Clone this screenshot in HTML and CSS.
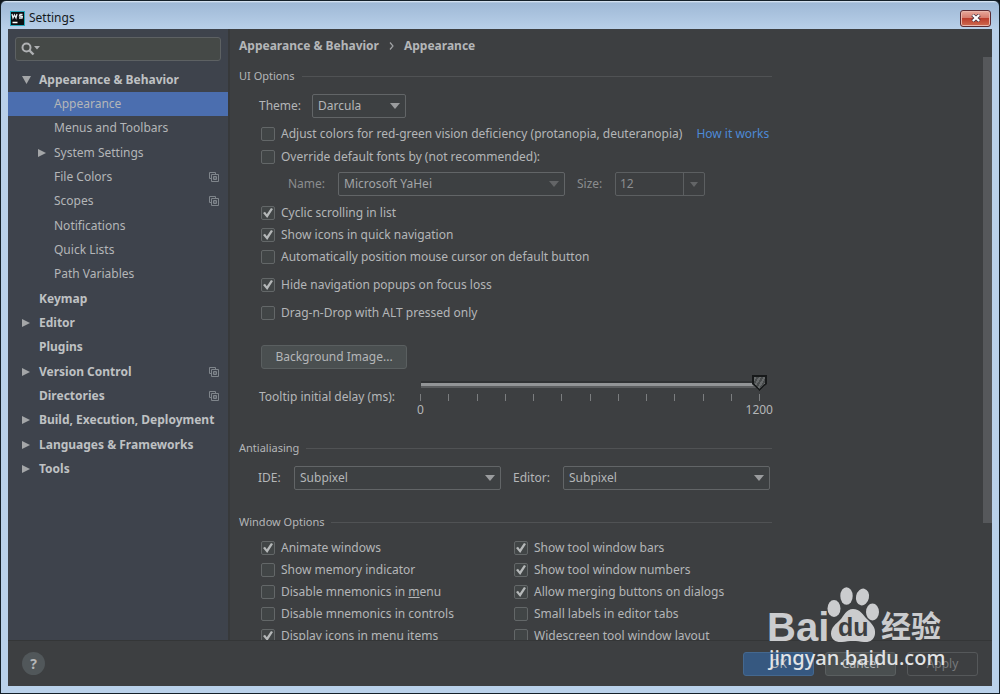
FILE: index.html
```html
<!DOCTYPE html>
<html lang="en">
<head>
<meta charset="utf-8">
<title>Settings</title>
<link rel="stylesheet" href="styles.css">
</head>
<body>
<svg class="defs" width="0" height="0" aria-hidden="true">
  <symbol id="copy" viewBox="0 0 10 10"><path d="M2.500 6.500H.5v-6h6v2M2.500 2.500h7v7h-7zM4.500 4.500h3v3h-3zM4.500 6h3" fill="none" stroke="currentColor"/></symbol>
  <symbol id="right" viewBox="0 0 8 10"><path d="M0 1l8 4-8 4z" fill="currentColor"/></symbol>
  <symbol id="down" viewBox="0 0 10 8"><path d="M1 0h9L5.500 8z" fill="currentColor"/></symbol>
</svg>
<div class="window">
  <header class="titlebar">
    <svg class="app-icon" width="15" height="15" viewBox="0 0 15 15" aria-hidden="true">
      <rect width="15" height="15" fill="#27a9bd"/><rect x="1" y="1" width="13" height="13" fill="#0c0f11"/>
      <path d="M2 3l1 4 1.500-3L6 7l1-4M12.500 3.500H10L9.500 5l2.800.6L12 7H9" fill="none" stroke="#e8eef0" stroke-width="1.300"/>
      <path d="M2.500 11.500h5" stroke="#fff" stroke-width="1.300"/>
    </svg>
    <h1 class="title">Settings</h1>
    <button class="close" aria-label="Close"><svg width="10" height="8" viewBox="0 0 10 8"><path d="M1.500.8l7 6.400M8.500.8l-7 6.400" stroke="#4a3340" stroke-width="3.600"/><path d="M1.800 1l6.400 6M8.200 1L1.800 7" stroke="#fff" stroke-width="2.200"/></svg></button>
  </header>

  <div class="client">
    <div class="body">
      <aside class="sidebar">
        <label class="search">
          <svg width="19" height="14" viewBox="0 0 19 14" aria-hidden="true"><circle cx="5.500" cy="5.500" r="4" fill="none" stroke="#afb1b3" stroke-width="2"/><path d="M8.500 8.500l4 4" stroke="#afb1b3" stroke-width="2.400"/><path d="M13 4h6l-3 3.500z" fill="#afb1b3"/></svg>
          <input type="text" aria-label="Search settings">
        </label>
        <nav>
          <ul class="tree">
            <li class="top"><svg class="arrow open"><use href="#down"/></svg>Appearance &amp; Behavior</li>
            <li class="child selected">Appearance</li>
            <li class="child">Menus and Toolbars</li>
            <li class="child"><svg class="arrow"><use href="#right"/></svg>System Settings</li>
            <li class="child">File Colors<svg class="copy"><use href="#copy"/></svg></li>
            <li class="child">Scopes<svg class="copy"><use href="#copy"/></svg></li>
            <li class="child">Notifications</li>
            <li class="child">Quick Lists</li>
            <li class="child">Path Variables</li>
            <li class="top">Keymap</li>
            <li class="top"><svg class="arrow"><use href="#right"/></svg>Editor</li>
            <li class="top">Plugins</li>
            <li class="top"><svg class="arrow"><use href="#right"/></svg>Version Control<svg class="copy"><use href="#copy"/></svg></li>
            <li class="top">Directories<svg class="copy"><use href="#copy"/></svg></li>
            <li class="top"><svg class="arrow"><use href="#right"/></svg>Build, Execution, Deployment</li>
            <li class="top"><svg class="arrow"><use href="#right"/></svg>Languages &amp; Frameworks</li>
            <li class="top"><svg class="arrow"><use href="#right"/></svg>Tools</li>
          </ul>
        </nav>
      </aside>

      <main class="main">
        <div class="crumbs"><span>Appearance &amp; Behavior</span><svg width="5" height="8" viewBox="0 0 5 8" aria-hidden="true"><path d="M1 .5L4 4 1 7.500" fill="none" stroke="#a0a2a4" stroke-width="1.200"/></svg><span>Appearance</span></div>
        <div class="scroll">
          <div class="page">
            <section>
              <h2>UI Options</h2>
              <div class="row theme">
                <label for="theme">Theme:</label>
                <span class="combo"><select id="theme"><option>Darcula</option></select></span>
              </div>
              <div class="checks">
                <div class="line"><label><input type="checkbox">Adjust colors for red-green vision deficiency (protanopia, deuteranopia)</label><a href="#">How it works</a></div>
                <label><input type="checkbox">Override default fonts by (not recommended):</label>
              </div>
              <div class="row font">
                <label for="name">Name:</label>
                <span class="combo off"><select id="name"><option>Microsoft YaHei</option></select></span>
                <label class="size" for="size">Size:</label>
                <span class="editable"><input id="size" type="text" value="12"><button aria-label="Choose size"><svg width="8" height="5" viewBox="0 0 8 5"><path d="M0 0h8L4 5z" fill="currentColor"/></svg></button></span>
              </div>
              <div class="checks compact">
                <label><input type="checkbox" checked>Cyclic scrolling in list</label>
                <label><input type="checkbox" checked>Show icons in quick navigation</label>
                <label><input type="checkbox">Automatically position mouse cursor on default button</label>
                <label class="apart"><input type="checkbox" checked>Hide navigation popups on focus loss</label>
                <label class="apart"><input type="checkbox">Drag-n-Drop with ALT pressed only</label>
              </div>
              <button class="btn image">Background Image...</button>
              <div class="delay">
                <label for="delay">Tooltip initial delay (ms):</label>
                <div class="slider">
                  <input id="delay" type="range" min="0" max="1200" value="1200">
                  <div class="ticks"><i></i><i></i><i></i><i></i><i></i><i></i><i></i><i></i><i></i><i></i><i></i><i></i><i></i></div>
                  <div class="scale"><span>0</span><span>1200</span></div>
                </div>
              </div>
            </section>

            <section class="antialiasing">
              <h2>Antialiasing</h2>
              <div class="row pair">
                <label for="ide">IDE:</label>
                <span class="combo"><select id="ide"><option>Subpixel</option></select></span>
                <label class="editor" for="editor">Editor:</label>
                <span class="combo"><select id="editor"><option>Subpixel</option></select></span>
              </div>
            </section>

            <section class="windows">
              <h2>Window Options</h2>
              <div class="checks compact columns">
                <label><input type="checkbox" checked>Animate windows</label>
                <label><input type="checkbox" checked>Show tool window bars</label>
                <label><input type="checkbox">Show memory indicator</label>
                <label><input type="checkbox" checked>Show tool window numbers</label>
                <label><input type="checkbox"><span>Disable mnemonics in <u>m</u>enu</span></label>
                <label><input type="checkbox" checked>Allow merging buttons on dialogs</label>
                <label><input type="checkbox">Disable mnemonics in controls</label>
                <label><input type="checkbox">Small labels in editor tabs</label>
                <label><input type="checkbox" checked>Display icons in menu items</label>
                <label><input type="checkbox">Widescreen tool window layout</label>
              </div>
            </section>
          </div>
          <div class="scrollbar"><div class="thumb"></div></div>
        </div>
      </main>
    </div>

    <footer class="footer">
      <button class="help" aria-label="Help">?</button>
      <div class="actions">
        <button class="btn ok">OK</button>
        <button class="btn">Cancel</button>
        <button class="btn apply" disabled>Apply</button>
      </div>
    </footer>
  </div>

  <div class="watermark">
    <div class="brand">
      <span class="bai">Bai</span>
      <span class="paw">
        <svg width="52" height="56" viewBox="0 0 52 56" aria-hidden="true"><g fill="currentColor"><ellipse cx="7" cy="21.500" rx="6.500" ry="8.500"/><ellipse cx="19.500" cy="9" rx="6.200" ry="8.800"/><ellipse cx="35.500" cy="10" rx="6.500" ry="8.500" transform="rotate(12 35.500 10)"/><ellipse cx="45.500" cy="25" rx="6.500" ry="8.500"/><path d="M26 22c7 0 10 6 14 10 4 4 9 8 8 15-1 6-5 8.500-11 8-4-.5-7-1-11-1s-7 .5-11 1C9 55.500 4.500 53 4 47c0-7 5-10 9-14 4-4 6-11 13-11z"/></g></svg>
        <span class="du">du</span>
      </span>
      <span class="jy" lang="zh">经验</span>
    </div>
    <div class="url">jingyan.baidu.com</div>
  </div>
</div>
</body>
</html>
```
FILE: styles.css
```css
* { box-sizing: border-box; }

body {
  margin: 0;
  background: #10171d;
  color: #b4b6b8;
  font: 12px/16px "Noto Sans", "Noto Sans CJK SC", sans-serif;
}

button, input, select { font: inherit; color: inherit; margin: 0; }
h1, h2, ul { margin: 0; padding: 0; font: inherit; list-style: none; }
.defs { position: absolute; }

.window {
  position: relative;
  display: flex;
  flex-direction: column;
  height: 100vh;
  padding: 1px 7px 7px;
  border: 1px solid #142029;
  border-radius: 6px 6px 0 0;
  background: linear-gradient(#e4eef8 0, #9fb9d6 2px, #b9d0e9 29px, #b9d1ea);
  overflow: hidden;
}

.titlebar {
  display: flex;
  align-items: center;
  flex: none;
  height: 27px;
  padding: 5px 1px 0 2px;
  color: #15191d;
}
.title { margin-left: 4px; }
.close {
  display: grid;
  place-items: center;
  width: 31px;
  height: 17px;
  margin-left: auto;
  padding: 0;
  border: 1px solid #5b2b33;
  border-radius: 3px;
  background: linear-gradient(#e7a99c, #d5796a 48%, #bb3e2d 50%, #cf6b50);
  box-shadow: inset 0 0 0 1px #e9b5aa;
}

.client {
  display: flex;
  flex-direction: column;
  flex: 1;
  min-height: 0;
  background: #3d3f41;
}
.body { display: flex; flex: 1; min-height: 0; border-bottom: 1px solid #343637; }

.sidebar {
  flex: none;
  width: 222px;
  padding-top: 8px;
  border-right: 2px solid #37393b;
  background: #3e434c;
}
.search {
  display: flex;
  align-items: center;
  height: 24px;
  margin: 0 7px 6px;
  padding-left: 5px;
  border: 1px solid #5d6163;
  border-radius: 3px;
  background: #454947;
}
.search input { flex: 1; min-width: 0; border: 0; outline: 0; background: none; }

.tree li {
  position: relative;
  display: flex;
  align-items: center;
  height: 24px;
  padding-right: 9px;
}
.tree li:nth-child(3n+1) { height: 25px; }
.tree .top { padding-left: 31px; font-weight: bold; color: #bfc1c3; }
.tree .child { padding-left: 46px; }
.tree .selected { background: #4b6eaf; }
.arrow { position: absolute; left: 14px; width: 8px; height: 10px; color: #a4a6a8; }
.child .arrow { left: 30px; }
.arrow.open { left: 13px; width: 10px; height: 8px; }
.copy { width: 10px; height: 10px; margin-left: auto; color: #7f858b; }

.main { display: flex; flex-direction: column; flex: 1; min-width: 0; }
.crumbs {
  display: flex;
  align-items: center;
  gap: 10px;
  flex: none;
  height: 28px;
  padding: 5px 9px 0;
  font-weight: bold;
}
.scroll { display: flex; flex: 1; min-height: 0; overflow: hidden; }
.page { flex: 1; max-width: 542px; padding: 11px 0 0 9px; }
.scrollbar { flex: none; width: 9px; margin-left: auto; }
.thumb { height: 80%; background: #56585b; }

h2 { display: flex; align-items: center; gap: 7px; font-size: 11px; }
h2::after { content: ""; flex: 1; height: 1px; background: #505254; }

.row { display: flex; align-items: center; padding-left: 19px; }
.combo { position: relative; display: flex; height: 24px; }
.combo select {
  appearance: none;
  width: 100%;
  padding: 0 5px;
  border: 1px solid #626567;
  border-radius: 2px;
  background: #3d4042;
}
.combo::after {
  content: "";
  position: absolute;
  right: 6px;
  top: 9px;
  width: 10px;
  height: 6px;
  background: #9a9c9e;
  clip-path: polygon(0 0, 100% 0, 50% 100%);
  pointer-events: none;
}
.combo.off::after { background: #636567; }

.theme { margin: 10px 0 4px; }
.theme label { width: 54px; padding-left: 1px; }
.theme .combo { width: 94px; }

.checks { display: flex; flex-direction: column; padding-left: 22px; }
.checks label { display: flex; align-items: center; height: 23px; white-space: nowrap; }
.compact label { height: 22px; }
.checks .apart { margin-top: 6px; }
.checks input {
  appearance: none;
  display: grid;
  place-items: center;
  width: 14px;
  height: 14px;
  margin-right: 6px;
  border: 1px solid #636768;
  border-radius: 2px;
  background: #414546;
}
.checks input:checked::after {
  content: "";
  width: 10px;
  height: 10px;
  background: #b5b8b9;
  clip-path: polygon(0 50%, 20% 38%, 38% 62%, 80% 0, 100% 10%, 42% 100%);
}
.line { display: flex; align-items: center; gap: 14px; }
a { color: #4d8ad6; text-decoration: none; white-space: nowrap; }

.font { margin: 4px 0 6px; padding-left: 49px; color: #8b8d8f; }
.font label { width: 50px; }
.font .combo { width: 227px; color: #a2a4a6; }
.font .size { margin-left: 12px; width: 38px; }
.editable { display: flex; width: 90px; height: 24px; border: 1px solid #5c5f61; border-radius: 2px; }
.editable input { flex: 1; min-width: 0; padding: 0 4px; border: 0; background: none; }
.editable button {
  display: grid;
  place-items: center;
  width: 21px;
  padding: 0;
  border: 0;
  border-left: 1px solid #5c5f61;
  background: none;
  color: #636567;
}

.btn {
  height: 24px;
  border: 1px solid #5a5f60;
  border-radius: 3px;
  background: #4a4f50;
}
.image { display: block; width: 146px; margin: 21px 0 6px 22px; padding: 0; }

.delay { display: flex; padding-left: 20px; }
.delay label { width: 154px; padding-top: 14px; }
.slider { flex: 1; margin-right: 5px; }
.slider input {
  display: block;
  appearance: none;
  width: 100%;
  height: 16px;
  background: linear-gradient(#303234 2px, #929496 2px, #929496 5px, #5b5d5f 5px) center 6px / calc(100% - 15px) 7px no-repeat;
}
.slider input::-webkit-slider-thumb {
  appearance: none;
  width: 15px;
  height: 16px;
  background:
    linear-gradient(#17191a, #17191a) top / 100% 2px no-repeat,
    linear-gradient(#17191a, #17191a) left / 2px 100% no-repeat,
    linear-gradient(#17191a, #17191a) right / 2px 100% no-repeat,
    linear-gradient(45deg, #17191a 7px, transparent 7px) left bottom / 8px 9px no-repeat,
    linear-gradient(-45deg, #17191a 7px, transparent 7px) right bottom / 8px 9px no-repeat,
    repeating-linear-gradient(-60deg, #66696a 0, #66696a 2px, #484b4c 2px, #484b4c 4px);
  clip-path: polygon(0 0, 100% 0, 100% 55%, 50% 100%, 0 55%);
}
.ticks { display: flex; justify-content: space-between; margin: 3px 7px 0; }
.ticks i { width: 1px; height: 7px; background: #7b7d7f; }
.scale { display: flex; justify-content: space-between; margin: 1px -6px 0 4px; }

.antialiasing { margin-top: 22px; }
.pair { margin-top: 10px; }
.pair label { width: 36px; }
.pair .combo { flex: 1; max-width: 207px; }
.pair .editor { width: 50px; margin-left: 12px; }

.windows { margin-top: 24px; }
.columns { display: grid; grid-template-columns: 253px 1fr; margin-top: 7px; }

.footer {
  display: flex;
  align-items: center;
  justify-content: space-between;
  flex: none;
  height: 45px;
  padding: 0 14px;
}
.help {
  width: 23px;
  height: 23px;
  padding: 0;
  border: 0;
  border-radius: 50%;
  background: #51575a;
  font-weight: bold;
  font-size: 14px;
}
.actions { display: flex; gap: 11px; }
.actions .btn { width: 71px; padding: 0; }
.actions .ok { border-color: #44688f; background: #365880; }
.actions .apply { background: none; border-color: #55585a; color: #77797b; }

.watermark {
  position: absolute;
  right: 54px;
  bottom: 20px;
  width: 178px;
  color: #cbccce;
  pointer-events: none;
}
.brand { display: flex; align-items: flex-end; }
.bai { width: 60px; font: bold 40px/40px "Liberation Sans", sans-serif; height: 36px; }
.paw { position: relative; height: 56px; }
.du {
  position: absolute;
  left: 11px;
  bottom: 3px;
  color: #3d3f41;
  font: bold 25px/25px "Liberation Sans", sans-serif;
}
.jy { margin-left: 2px; height: 34px; font: bold 30px/30px "Noto Sans CJK SC", sans-serif; }
.url { padding-left: 2px; font: 500 20px/30px "Noto Sans", sans-serif; color: #e2e4e6; }
```
